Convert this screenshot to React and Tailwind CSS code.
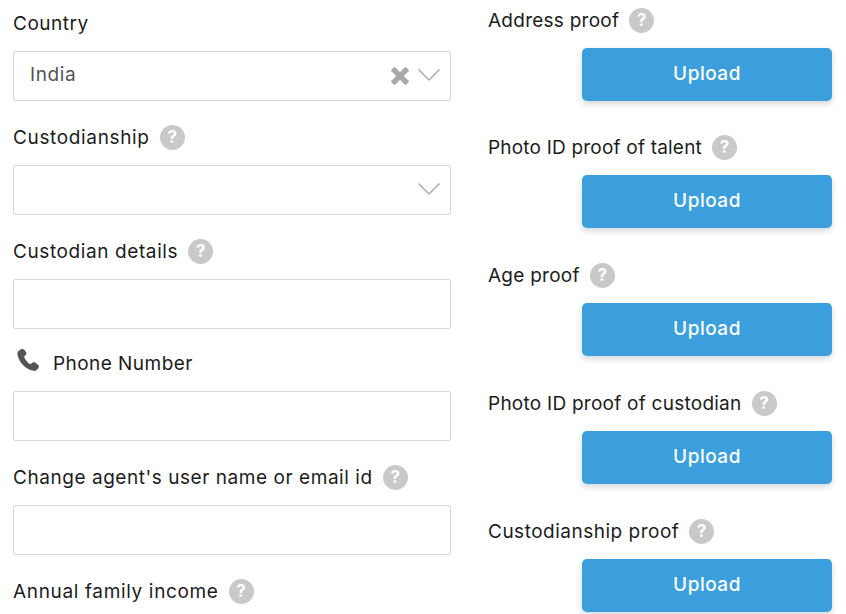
import React from 'react';

const font = "font-['Inter','Liberation_Sans',sans-serif]";

function Help() {
    return (
        <span className="flex h-[25px] w-[25px] shrink-0 items-center justify-center rounded-full bg-[#c9c9c9] text-[17px] font-bold leading-none tracking-normal text-white">?</span>
    );
}

function Label({ text, help, className }) {
    return (
        <div className={`flex h-7 items-center gap-[10px] text-[19px] text-[#1c1c1c] ${className}`}>
            <span className="mt-[2px]">{text}</span>
            {help && <Help />}
        </div>
    );
}

function Chevron() {
    return (
        <svg className="mb-[3px]" width="24" height="14" viewBox="0 0 24 14" fill="none" stroke="#ababab" strokeWidth="1.5">
            <path d="M1.5 1.5 L12 12 L22.5 1.5" />
        </svg>
    );
}

function Cross() {
    return (
        <svg width="20" height="20" viewBox="0 0 20 20" fill="#a8a8a8">
            <path d="M4.6 0.8 L10 6.2 L15.4 0.8 L19.2 4.6 L13.8 10 L19.2 15.4 L15.4 19.2 L10 13.8 L4.6 19.2 L0.8 15.4 L6.2 10 L0.8 4.6 Z" />
        </svg>
    );
}

function Phone() {
    return (
        <svg width="24" height="24" viewBox="0 0 24 24" fill="#555555">
            <path d="M7.2 1.2 C6.4 0.9 5.4 1 4.6 1.5 L2.8 2.8 C1.6 3.7 1.2 5.2 1.5 6.7 C2.4 10.8 4.4 14.4 7.2 17.2 C10 20 13.4 22 17.4 22.8 C18.8 23.1 20.3 22.6 21.2 21.5 L22.5 19.8 C23.1 19 23.1 17.9 22.4 17.2 L19.2 14.6 C18.4 14 17.4 14 16.6 14.6 L15.2 15.8 C14.6 16.2 13.9 16.2 13.3 15.7 C11.2 14 9.6 12 8.4 9.8 C8.1 9.2 8.2 8.5 8.7 8 L9.9 6.8 C10.5 6.2 10.6 5.3 10.2 4.5 L8.6 2 C8.3 1.6 7.8 1.4 7.2 1.2 Z" />
        </svg>
    );
}

function Field({ children }) {
    return (
        <div className="mt-[14px] flex h-[50px] items-center rounded-[2px] border border-[#d8d8d8] bg-white px-[16px] text-[19px] tracking-[0.6px] text-[#555555]">
            {children}
        </div>
    );
}

function Upload({ text, className, labelClass = 'tracking-[0.25px]' }) {
    return (
        <div className={className}>
            <Label text={text} help className={labelClass} />
            <div className="mt-[14px] flex justify-end pr-[14px]">
                <button className="h-[53px] w-[250px] rounded-[5px] bg-[#3a9fdc] text-[19px] font-medium tracking-[0.5px] text-white shadow-[0_3px_6px_rgba(0,0,0,0.16)]">
                    Upload
                </button>
            </div>
        </div>
    );
}

export default function App() {
    return (
        <div className={`flex h-[614px] w-[846px] overflow-hidden bg-white ${font}`}>
            <div className="ml-[13px] w-[438px] pt-[9px]">
                <Label text="Country" className="tracking-[0.5px]" />
                <Field>
                    <span className="mb-[2px] flex-1">India</span>
                    <div className="mr-[-7px] flex items-center gap-[7px]">
                        <Cross />
                        <Chevron />
                    </div>
                </Field>

                <Label text="Custodianship" help className="mt-[22px] tracking-[0.65px]" />
                <Field>
                    <span className="flex-1" />
                    <div className="mr-[-7px] flex"><Chevron /></div>
                </Field>

                <Label text="Custodian details" help className="mt-[22px] tracking-[0.6px]" />
                <Field />

                <div className="mt-[20px] flex h-7 items-center gap-[13px] pl-[3px]">
                    <div className="mb-[6px]"><Phone /></div>
                    <span className="mt-[2px] text-[19px] tracking-[0.45px] text-[#1c1c1c]">Phone Number</span>
                </div>
                <Field />

                <Label text="Change agent's user name or email id" help className="mt-[22px] tracking-[0.55px]" />
                <Field />

                <Label text="Annual family income" help className="mt-[22px] tracking-[0.65px]" />
            </div>

            <div className="ml-[37px] flex-1 pt-[6px]">
                <Upload text="Address proof" />
                <Upload text="Photo ID proof of talent" className="mt-[32px]" labelClass="tracking-[0.2px]" />
                <Upload text="Age proof" className="mt-[33px]" />
                <Upload text="Photo ID proof of custodian" className="mt-[33px]" />
                <Upload text="Custodianship proof" className="mt-[33px]" labelClass="tracking-[0.5px]" />
            </div>
        </div>
    );
}
